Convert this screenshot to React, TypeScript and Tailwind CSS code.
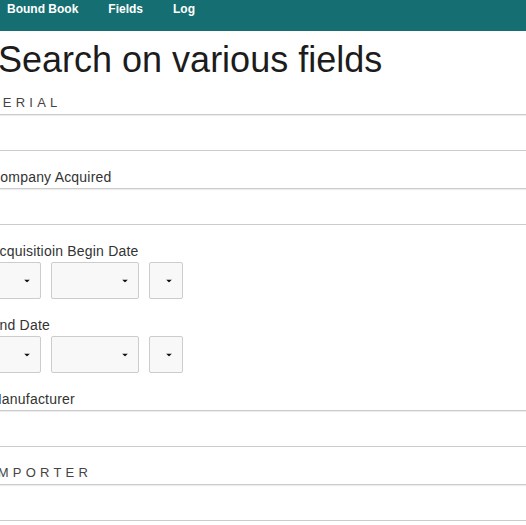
import React from "react";

const font = { fontFamily: '"Liberation Sans", Arial, Helvetica, sans-serif' };

function Caret() {
  return (
    <svg width="6" height="3" viewBox="0 0 6 3" className="absolute right-[10px] top-1/2 -translate-y-1/2">
      <polygon points="0,0 6,0 3,3" fill="#111" />
    </svg>
  );
}

function Select({ w }: { w: string }) {
  return <div className={`relative h-[37px] rounded-[2px] border border-[#cccccc] bg-[#f8f8f8] ${w}`}><Caret /></div>;
}

function TextInput() {
  return <div className="h-[37px] w-full border border-[#cccccc] bg-white shadow-[inset_0_1px_1px_rgba(0,0,0,0.08)]" />;
}

function Label({ children, caps }: { children: React.ReactNode; caps?: boolean }) {
  return (
    <div
      className={
        caps
          ? "mb-[1px] h-[20px] text-[13px] leading-[20px] tracking-[4.2px] text-[#444]"
          : "mb-[1px] h-[20px] text-[14px] leading-[20px] tracking-[0.2px] text-[#333]"
      }
    >
      {children}
    </div>
  );
}

function DateRow() {
  return (
    <div className="flex gap-[10px]">
      <Select w="w-[51px]" />
      <Select w="w-[88px]" />
      <Select w="w-[34px]" />
    </div>
  );
}

export default function App() {
  return (
    <div className="h-[525px] w-[526px] overflow-hidden bg-white" style={font}>
      <nav className="flex h-[31px] gap-[30px] bg-[#156f72] pl-[7px] pt-[1px] text-[12px] font-bold leading-[16px] text-white">
        <span>Bound Book</span>
        <span>Fields</span>
        <span>Log</span>
      </nav>
      <h1 className="-ml-[2px] mt-[11px] whitespace-nowrap text-[36px] leading-[36px] text-[#1c1c1c]">
        Search on various fields
      </h1>
      <form className="-ml-[10px] mt-[15px] flex w-[580px] flex-col gap-[16px]">
        <div>
          <Label caps>SERIAL</Label>
          <TextInput />
        </div>
        <div>
          <Label>Company Acquired</Label>
          <TextInput />
        </div>
        <div>
          <Label>Acquisitioin Begin Date</Label>
          <DateRow />
        </div>
        <div>
          <Label>End Date</Label>
          <DateRow />
        </div>
        <div>
          <Label>Manufacturer</Label>
          <TextInput />
        </div>
        <div>
          <Label caps>IMPORTER</Label>
          <TextInput />
        </div>
      </form>
    </div>
  );
}
